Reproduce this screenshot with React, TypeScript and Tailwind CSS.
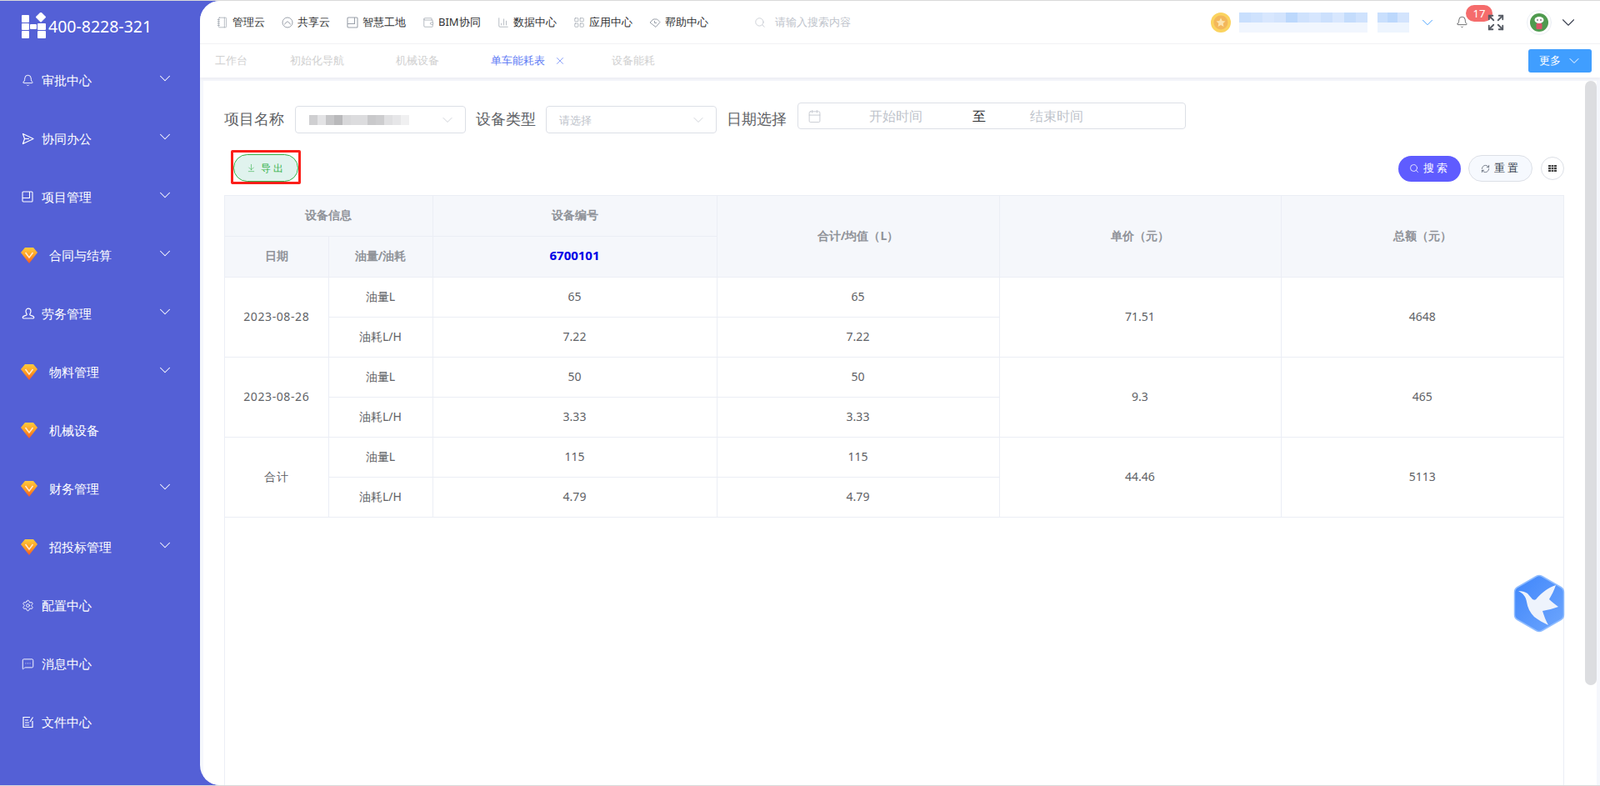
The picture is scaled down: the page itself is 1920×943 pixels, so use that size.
import React from "react";
import {
  Bell,
  Settings,
  MessageSquareMore,
  ChevronDown,
  Search,
  ArrowDownToLine,
  RefreshCw,
  X,
  Calendar,
  Notebook,
  Wallet,
  ChartColumn,
  LayoutGrid,
  Expand,
} from "lucide-react";

const Gem = () => (
  <svg width="20" height="20" viewBox="0 0 20 20" className="shrink-0">
    <defs>
      <linearGradient id="gem" x1="0" y1="0" x2="0" y2="1">
        <stop offset="0" stopColor="#ffcb3f" />
        <stop offset="0.55" stopColor="#ff9a1f" />
        <stop offset="1" stopColor="#f2562b" />
      </linearGradient>
    </defs>
    <path d="M5 1h10l5 6-10 13L0 7z" fill="url(#gem)" />
    <path d="M5.500 7l4.500 6 4.500-6" fill="none" stroke="#ffe9d0" strokeWidth="1.600" />
  </svg>
);

const Worker = () => (
  <svg width="16" height="16" viewBox="0 0 16 16" fill="none" stroke="currentColor" strokeWidth="1.200" className="shrink-0">
    <path d="M5 5.200a3 3 0 0 1 6 0c0 2-1 3-1.200 4.200 0 1 3.400 1.200 4.700 2.600.6.800.2 2-.8 2H2.300c-1 0-1.400-1.200-.8-2 1.300-1.400 4.700-1.600 4.700-2.600C6 8.200 5 7.200 5 5.200z" />
  </svg>
);

const Plane = () => (
  <svg width="15" height="15" viewBox="0 0 15 15" fill="none" stroke="currentColor" strokeWidth="1.200" strokeLinejoin="round" className="shrink-0">
    <path d="M1.500 1.500L14 7.500 1.500 13.500 3.500 7.500z" />
    <path d="M3.500 7.500H9" />
  </svg>
);

const BookBox = ({ color = "currentColor" }: { color?: string }) => (
  <svg width="14" height="14" viewBox="0 0 14 14" fill="none" stroke={color} strokeWidth="1.100" className="shrink-0">
    <rect x="1" y="1" width="12" height="12" rx="1" />
    <path d="M9.500 1v7.500H1" />
  </svg>
);

const Note = () => (
  <svg width="15" height="15" viewBox="0 0 15 15" fill="none" stroke="currentColor" strokeWidth="1.200" className="shrink-0">
    <path d="M10 1.500H2v12h11V6" />
    <path d="M4 5h4M4 8h5M4 11h5" />
    <path d="M10 7l3.500-5.500" />
  </svg>
);

type MenuItem = { label: string; icon: React.ReactNode; gem?: boolean; arrow?: boolean };

const ico = { size: 15, strokeWidth: 1.5, className: "shrink-0" };

const menu: MenuItem[] = [
  { label: "审批中心", icon: <Bell {...ico} />, arrow: true },
  { label: "协同办公", icon: <Plane />, arrow: true },
  { label: "项目管理", icon: <BookBox />, arrow: true },
  { label: "合同与结算", icon: <Gem />, gem: true, arrow: true },
  { label: "劳务管理", icon: <Worker />, arrow: true },
  { label: "物料管理", icon: <Gem />, gem: true, arrow: true },
  { label: "机械设备", icon: <Gem />, gem: true },
  { label: "财务管理", icon: <Gem />, gem: true, arrow: true },
  { label: "招投标管理", icon: <Gem />, gem: true, arrow: true },
  { label: "配置中心", icon: <Settings {...ico} /> },
  { label: "消息中心", icon: <MessageSquareMore {...ico} /> },
  { label: "文件中心", icon: <Note /> },
];

const CloudRound = () => (
  <svg width="14" height="14" viewBox="0 0 14 14" fill="none" stroke="#9aa0aa" strokeWidth="1">
    <circle cx="7" cy="7" r="6" />
    <path d="M3.500 9.500c0-1.200 1-1.700 1.500-1.600C5.300 6.500 6 6 7 6s1.800.7 2 1.900c.8 0 1.500.5 1.500 1.600" />
  </svg>
);

const Tag = () => (
  <svg width="14" height="14" viewBox="0 0 14 14" fill="none" stroke="#9aa0aa" strokeWidth="1">
    <path d="M1 7l4-4h4.500L13 6.500 8 12.500z" />
    <path d="M6.500 5v2.500H9" />
  </svg>
);

const navIco = { size: 14, strokeWidth: 1.2, color: "#9aa0aa" };

const nav = [
  { label: "管理云", icon: <Notebook {...navIco} /> },
  { label: "共享云", icon: <CloudRound /> },
  { label: "智慧工地", icon: <BookBox color="#9aa0aa" /> },
  { label: "BIM协同", icon: <Wallet {...navIco} /> },
  { label: "数据中心", icon: <ChartColumn {...navIco} /> },
  { label: "应用中心", icon: <LayoutGrid {...navIco} /> },
  { label: "帮助中心", icon: <Tag /> },
];

const blueBlocks = [
  "bg-[#c9dffd]", "bg-[#cfe2fd]", "bg-[#d8e7fe]", "bg-[#d3e4fd]", "bg-[#bcd8fc]", "bg-[#cfe2fd]", "bg-[#d6e6fe]", "bg-[#cce0fd]", "bg-[#d8e7fe]", "bg-[#c4dcfc]", "bg-[#cfe2fd]",
];

const grayBlocks = [
  "bg-[#cfcfd1]", "bg-[#e3e3e5]", "bg-[#c6c6c8]", "bg-[#b9b9bb]", "bg-[#d8d8da]", "bg-[#dcdcde]", "bg-[#dcdcde]", "bg-[#c9c9cb]", "bg-[#cdcdcf]", "bg-[#e0e0e2]", "bg-[#e6e6e8]", "bg-[#f0f0f1]",
];

const cellLine = "border-r border-b border-[#ebeef5]";
const thBase = `${cellLine} pb-[2px] bg-[#f5f7fb] text-[14px] font-bold text-center`;
const th = `${thBase} text-[#909399]`;
const td = `${cellLine} pb-[2px] text-[14px] text-[#606266] text-center`;

const rows = [
  { date: "2023-08-28", oil: "65", rate: "7.22", price: "71.51", total: "4648" },
  { date: "2023-08-26", oil: "50", rate: "3.33", price: "9.3", total: "465" },
  { date: "合计", oil: "115", rate: "4.79", price: "44.46", total: "5113" },
];

export default function App() {
  return (
    <div className="h-[943px] w-[1920px] overflow-hidden bg-[#d9d9d9] py-px font-['Open_Sans','Noto_Sans_CJK_SC',sans-serif]">
      <div className="flex h-full bg-[#5460d6]">
        <aside className="w-[240px] shrink-0 text-white">
          <div className="flex h-[60px] items-center pl-[26px]">
            <svg width="30" height="32" viewBox="0 0 30 32" fill="#fff">
              <rect x="0" y="3" width="9" height="9" rx="1" />
              <rect x="18.500" y="1" width="9" height="9" rx="1" transform="rotate(45 23 5.500)" />
              <rect x="0" y="13" width="9" height="8" rx="1" />
              <rect x="10" y="14" width="8" height="6" rx="1" />
              <rect x="19" y="13" width="10" height="8" rx="1" />
              <rect x="0" y="22" width="9" height="9" rx="1" />
              <rect x="19" y="22" width="10" height="9" rx="1" />
            </svg>
            <span className="ml-[2px] mt-[2px] font-['Liberation_Sans',sans-serif] text-[19.500px] leading-none">400-8228-321</span>
          </div>
          <nav className="flex flex-col">
            {menu.map((m) => (
              <div key={m.label} className="flex h-[70px] items-center pl-[26px] pr-[31px]">
                <span className={m.gem ? "-ml-[1px] w-[34px]" : "w-[24px]"}>{m.icon}</span>
                <span className="text-[15px]">{m.label}</span>
                {m.arrow && <ChevronDown size={22} strokeWidth={1.1} className="mb-[5px] ml-auto" />}
              </div>
            ))}
          </nav>
        </aside>

        <main className="relative flex min-w-0 flex-1 flex-col overflow-hidden rounded-l-[24px] bg-[#f5f7fc]">
          <header className="flex h-[52px] shrink-0 items-center border-b border-[#f2f2f4] bg-white pl-[20px] pr-[25px]">
            <div className="flex items-center gap-[20px]">
              {nav.map((n) => (
                <div key={n.label} className="flex items-center gap-[5px] text-[13px] text-[#303133]">
                  {n.icon}
                  <span>{n.label}</span>
                </div>
              ))}
            </div>
            <div className="ml-[55px] flex items-center gap-[11px] text-[13px] text-[#c0c4cc]">
              <Search size={14} strokeWidth={1.3} />
              <span>请输入搜索内容</span>
            </div>
            <div className="ml-auto flex items-center">
              <svg width="24" height="24" viewBox="0 0 24 24">
                <circle cx="12" cy="12" r="12" fill="#fbd35f" />
                <circle cx="12" cy="12" r="8.500" fill="#f3b75b" />
                <path d="M12 6.500l1.700 3.500 3.800.5-2.800 2.600.7 3.800-3.400-1.900-3.400 1.900.7-3.800-2.800-2.600 3.800-.5z" fill="#fbe3ae" />
              </svg>
              <div className="ml-[10px] flex h-[24px] w-[204px] flex-col">
                <div className="flex h-[12px]">
                  {blueBlocks.map((c, i) => (
                    <div key={i} className={`h-full w-[14px] ${c}`} />
                  ))}
                  <div className="ml-[12px] h-full w-[12px] bg-[#c9dffd]" />
                  <div className="h-full w-[12px] bg-[#bcd8fc]" />
                  <div className="h-full w-[14px] bg-[#d3e4fd]" />
                </div>
                <div className="flex h-[12px]">
                  <div className="h-full w-[154px] bg-[#f1f6fe]" />
                  <div className="ml-[12px] h-full w-[38px] bg-[#eef5fe]" />
                </div>
              </div>
              <ChevronDown size={22} strokeWidth={1} className="ml-[11px] text-[#409eff]" />
              <div className="relative ml-[22px] flex w-[16px] justify-center">
                <Bell size={15} strokeWidth={1.1} className="text-[#303133]" />
                <span className="absolute -top-[13px] left-[13px] h-[20px] w-[32px] rounded-full bg-[#f56c6c] text-center text-[13px] leading-[20px] text-white">17</span>
              </div>
              <Expand size={22} strokeWidth={2} className="relative ml-[22px] text-[#555a63]" />
              <div className="ml-[26px] flex h-[30px] w-[30px] items-center justify-center rounded-full border border-[#ebeef5]">
                <svg width="22" height="22" viewBox="0 0 22 22">
                  <circle cx="11" cy="11" r="11" fill="#4f9a4f" />
                  <ellipse cx="11" cy="8" rx="5.500" ry="4" fill="#fff" />
                  <rect x="7.500" y="12" width="7" height="7" rx="1" fill="#d9546a" />
                  <circle cx="9" cy="8" r=".8" fill="#222" />
                  <circle cx="13" cy="8" r=".8" fill="#222" />
                </svg>
              </div>
              <ChevronDown size={26} strokeWidth={1} className="ml-[7px] text-[#3c4252]" />
            </div>
          </header>

          <div className="flex h-[40px] shrink-0 items-center bg-white pl-[18px] pr-[10px] text-[13px] text-[#d0d0d0] shadow-[0_2px_3px_#ececf2]">
            <span>工作台</span>
            <span className="ml-[51px]">初始化导航</span>
            <span className="ml-[62px]">机械设备</span>
            <span className="ml-[62px] text-[#5f7df5]">单车能耗表</span>
            <X size={14} strokeWidth={1.2} className="ml-[11px] text-[#5f7df5]" />
            <span className="ml-[55px]">设备能耗</span>
            <button className="ml-auto flex h-[28px] w-[76px] items-center justify-center gap-[6px] rounded-[3px] bg-[#409eff] pl-[2px] text-[13px] text-white">
              更多
              <ChevronDown size={20} strokeWidth={1.2} />
            </button>
          </div>

          <div className="ml-[4px] mr-[4px] mt-[4px] flex min-h-0 flex-1 bg-white">
            <section className="flex min-w-0 flex-1 flex-col pl-[25px] pr-[25px]">
              <div className="mt-[26px] flex h-[37px] shrink-0 items-start whitespace-nowrap text-[17.600px] leading-[38px] text-[#606266]">
                <span className="w-[73px]">项目名称</span>
                <div className="ml-[12px] mt-[4px] flex h-[33px] w-[205px] items-center rounded-[4px] border border-[#dcdfe6] pl-[16px] pr-[11px]">
                  <div className="flex h-[12px]">
                    {grayBlocks.map((c, i) => (
                      <div key={i} className={`h-full w-[10px] ${c}`} />
                    ))}
                  </div>
                  <ChevronDown size={20} strokeWidth={0.9} className="ml-auto text-[#c0c4cc]" />
                </div>
                <span className="ml-[12px] w-[72px]">设备类型</span>
                <div className="ml-[12px] mt-[4px] flex h-[33px] w-[205px] items-center rounded-[4px] border border-[#dcdfe6] pl-[15px] pr-[11px] text-[13px] text-[#c0c4cc]">
                  请选择
                  <ChevronDown size={20} strokeWidth={0.9} className="ml-auto" />
                </div>
                <span className="ml-[12px] w-[72px]">日期选择</span>
                <div className="ml-[13px] flex h-[32px] w-[466px] items-center rounded-[4px] border border-[#dcdfe6] pl-[11px] text-[16px] leading-none text-[#c0c4cc]">
                  <Calendar size={17} strokeWidth={1.2} />
                  <span className="ml-[57px]">开始时间</span>
                  <span className="ml-[60px] text-[#303133]">至</span>
                  <span className="ml-[53px]">结束时间</span>
                </div>
              </div>

              <div className="mt-[20px] flex h-[54px] shrink-0 items-start justify-between">
                <div className="ml-[8px] flex h-[41px] w-[84px] items-end justify-center rounded-[2px] border-[3px] border-[#fb1f1a]">
                  <button className="flex h-[33px] w-[78px] items-center justify-center gap-[6px] rounded-full border border-[#36b24a] bg-[#e0f3ee] text-[12px] tracking-[3px] text-[#36b24a]">
                    <ArrowDownToLine size={11} strokeWidth={1.3} />
                    导出
                  </button>
                </div>
                <div className="mt-[6px] flex items-center">
                  <button className="flex h-[31px] w-[75px] items-center justify-center gap-[5px] rounded-full bg-[#5f5cff] text-[13px] tracking-[3px] text-white">
                    <Search size={12} strokeWidth={1.6} />
                    搜索
                  </button>
                  <button className="ml-[9px] flex h-[32px] w-[77px] items-center justify-center gap-[5px] rounded-full border border-[#dcdfe6] bg-[#f6f9fe] text-[13px] tracking-[3px] text-[#303a4a]">
                    <RefreshCw size={11} strokeWidth={1.3} />
                    重置
                  </button>
                  <button className="ml-[10px] flex h-[28px] w-[28px] items-center justify-center rounded-full border border-[#dcdfe6]">
                    <svg width="10" height="8" viewBox="0 0 10 8" fill="#444">
                      <rect x="0" y="0" width="10" height="2.200" />
                      <rect x="0" y="2.900" width="10" height="2.200" />
                      <rect x="0" y="5.800" width="10" height="2.200" />
                      <rect x="3" y="0" width=".6" height="8" fill="#fff" />
                      <rect x="6.400" y="0" width=".6" height="8" fill="#fff" />
                    </svg>
                  </button>
                </div>
              </div>

              <div className="flex-1 border-x border-t border-[#ebeef5]">
                <table className="w-full table-fixed border-collapse">
                  <colgroup>
                    <col className="w-[124px]" />
                    <col className="w-[125px]" />
                    <col className="w-[341px]" />
                    <col className="w-[339px]" />
                    <col className="w-[338px]" />
                    <col />
                  </colgroup>
                  <thead>
                    <tr className="h-[48px]">
                      <th colSpan={2} className={th}>设备信息</th>
                      <th className={th}>设备编号</th>
                      <th rowSpan={2} className={th}>合计/均值（L）</th>
                      <th rowSpan={2} className={th}>单价（元）</th>
                      <th rowSpan={2} className={`${th} border-r-0`}>总额（元）</th>
                    </tr>
                    <tr className="h-[49px]">
                      <th className={th}>日期</th>
                      <th className={th}>油量/油耗</th>
                      <th className={`${thBase} text-[15px] text-[#0000e6]`}>6700101</th>
                    </tr>
                  </thead>
                  <tbody>
                    {rows.map((r) => (
                      <React.Fragment key={r.date}>
                        <tr className="h-[48px]">
                          <td rowSpan={2} className={`${td} tracking-[0.6px]`}>{r.date}</td>
                          <td className={td}>油量L</td>
                          <td className={td}>{r.oil}</td>
                          <td className={td}>{r.oil}</td>
                          <td rowSpan={2} className={td}>{r.price}</td>
                          <td rowSpan={2} className={`${td} border-r-0`}>{r.total}</td>
                        </tr>
                        <tr className="h-[48px]">
                          <td className={td}>油耗L/H</td>
                          <td className={td}>{r.rate}</td>
                          <td className={td}>{r.rate}</td>
                        </tr>
                      </React.Fragment>
                    ))}
                  </tbody>
                </table>
              </div>
            </section>
            <div className="w-[14px] shrink-0">
              <div className="h-[725px] rounded-full bg-[#dcdde0]" />
            </div>
          </div>

          <svg width="64" height="70" viewBox="0 0 64 70" className="absolute left-[1575px] top-[688px]">
            <defs>
              <linearGradient id="hex" x1="0" y1="0" x2="1" y2="1">
                <stop offset="0" stopColor="#3f86fb" />
                <stop offset="1" stopColor="#6ea6fd" />
              </linearGradient>
            </defs>
            <path d="M28.500 2.500a7 7 0 0 1 7 0l22.500 13a7 7 0 0 1 3.500 6v27a7 7 0 0 1-3.500 6l-22.500 13a7 7 0 0 1-7 0L6 54.500a7 7 0 0 1-3.500-6v-27a7 7 0 0 1 3.500-6z" fill="url(#hex)" stroke="#8fbcff" strokeWidth="1.500" />
            <path d="M7 20c4 0 8 1 11 3 2 2 4 5 6 7 2 1 4 1 5-1 6-7 14-13 23-16-2 6-5 12-8 17 3 3 7 6 11 9-6 2-13 4-19 5 2 6 4 12 7 17-6-3-12-6-17-10-5-5-8-11-9-18-1-6-4-10-10-13z" fill="#eef3fc" />
          </svg>
        </main>
      </div>
    </div>
  );
}
